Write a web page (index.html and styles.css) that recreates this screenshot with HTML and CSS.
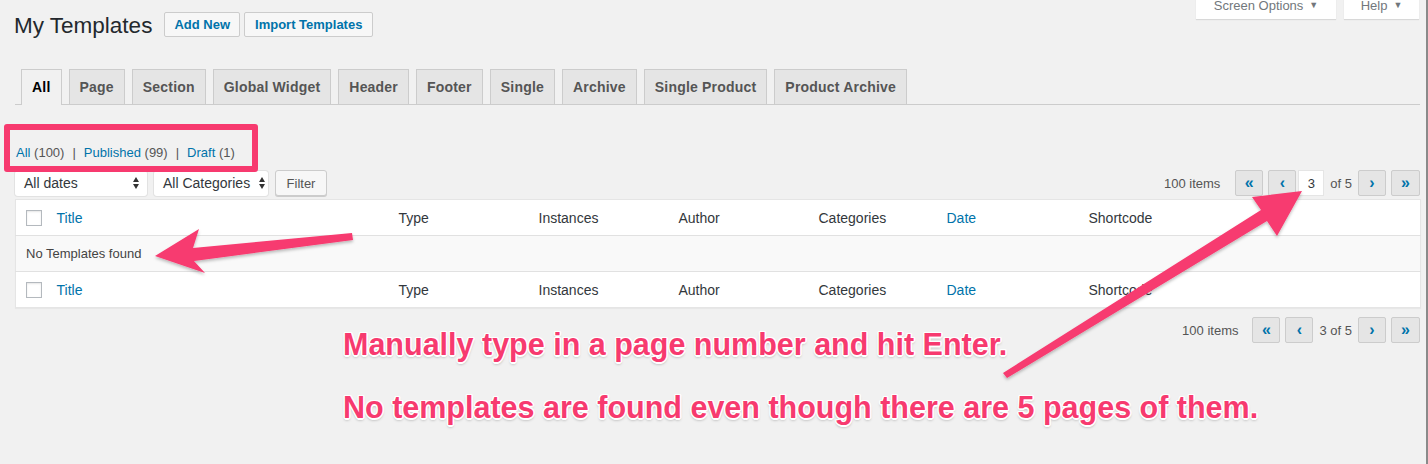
FILE: index.html
```html
<!DOCTYPE html>
<html lang="en">
<head>
<meta charset="utf-8">
<title>My Templates</title>
<link rel="stylesheet" href="styles.css">
</head>
<body>
<div class="screen-meta">
  <button class="meta-tab meta-screen">Screen Options <span class="tri">▼</span></button>
  <button class="meta-tab meta-help">Help <span class="tri">▼</span></button>
</div>

<div class="wrap">
  <div class="page-head">
    <h1 class="page-title">My Templates</h1>
    <a class="page-action">Add New</a>
    <a class="page-action">Import Templates</a>
  </div>

  <nav class="tabs">
    <a class="tab tab-active">All</a>
    <a class="tab">Page</a>
    <a class="tab">Section</a>
    <a class="tab">Global Widget</a>
    <a class="tab">Header</a>
    <a class="tab">Footer</a>
    <a class="tab">Single</a>
    <a class="tab">Archive</a>
    <a class="tab">Single Product</a>
    <a class="tab">Product Archive</a>
  </nav>

  <ul class="subsubsub">
    <li><a class="cur">All</a> <span class="count">(100)</span></li>
    <li class="sep">|</li>
    <li><a>Published</a> <span class="count">(99)</span></li>
    <li class="sep">|</li>
    <li><a>Draft</a> <span class="count">(1)</span></li>
  </ul>

  <div class="tablenav tablenav-top">
    <div class="filters">
      <div class="select sel-dates">All dates <span class="updown"></span></div>
      <div class="select sel-cats">All Categories <span class="updown"></span></div>
      <button class="btn-filter">Filter</button>
    </div>
    <div class="pagination">
      <span class="items">100 items</span>
      <span class="pg-btn">«</span>
      <span class="pg-btn">‹</span>
      <span class="pg-input">3</span>
      <span class="pg-of">of 5</span>
      <span class="pg-btn">›</span>
      <span class="pg-btn pg-last">»</span>
    </div>
  </div>

  <table class="list">
    <colgroup>
      <col class="c-cb"><col class="c-title"><col class="c-type"><col class="c-inst"><col class="c-author"><col class="c-cat"><col class="c-date"><col class="c-short">
    </colgroup>
    <thead>
      <tr>
        <td class="cb"><span class="checkbox"></span></td>
        <th class="link">Title</th>
        <th>Type</th>
        <th>Instances</th>
        <th>Author</th>
        <th>Categories</th>
        <th class="link">Date</th>
        <th>Shortcode</th>
      </tr>
    </thead>
    <tbody>
      <tr class="no-items"><td colspan="8">No Templates found</td></tr>
    </tbody>
    <tfoot>
      <tr>
        <td class="cb"><span class="checkbox"></span></td>
        <th class="link">Title</th>
        <th>Type</th>
        <th>Instances</th>
        <th>Author</th>
        <th>Categories</th>
        <th class="link">Date</th>
        <th>Shortcode</th>
      </tr>
    </tfoot>
  </table>

  <div class="tablenav tablenav-bottom">
    <div class="pagination">
      <span class="items">100 items</span>
      <span class="pg-btn">«</span>
      <span class="pg-btn">‹</span>
      <span class="pg-text">3 of 5</span>
      <span class="pg-btn">›</span>
      <span class="pg-btn pg-last">»</span>
    </div>
  </div>
</div>

<div class="annot-box"></div>
<svg class="annot-arrows" width="1428" height="464" viewBox="0 0 1428 464">
  <defs>
    <filter id="sh" x="-10%" y="-10%" width="120%" height="130%">
      <feDropShadow dx="0" dy="2" stdDeviation="1.5" flood-color="#000" flood-opacity="0.25"/>
    </filter>
  </defs>
  <polygon filter="url(#sh)" fill="#f73a6f" points="352,233 193,248 199,229 155,256 205,273 194,261 353,240"/>
  <polygon filter="url(#sh)" fill="#f73a6f" points="1003,373 1261,210 1252,197 1302,191 1277,236 1267,221 1007,378"/>
</svg>
<p class="annot-text">Manually type in a page number and hit Enter.<br>No templates are found even though there are 5 pages of them.</p>
<div class="edge"></div>
</body>
</html>
```

FILE: styles.css
```css
html, body {
  margin: 0;
  padding: 0;
}
body {
  background: #f1f1f1;
  font-family: "Liberation Sans", Arial, sans-serif;
  color: #444;
  font-size: 13px;
  width: 1428px;
  height: 464px;
  overflow: hidden;
  position: relative;
}

/* screen meta */
.screen-meta {
  position: absolute;
  top: -9px;
  right: 9px;
  display: flex;
  gap: 8px;
}
.meta-tab {
  font-family: "Liberation Sans", Arial, sans-serif;
  background: #fff;
  border: 0;
  height: 28px;
  padding: 0 16px;
  font-size: 13px;
  color: #72777c;
  box-shadow: 0 1px 1px rgba(0,0,0,.1);
  display: flex;
  align-items: center;
  gap: 6px;
}
.meta-screen { width: 140px; justify-content: center; }
.meta-help { width: 75px; justify-content: center; }
.tri { font-size: 9px; color: #72777c; }

.wrap {
  padding: 9px 8px 0 15px;
}

/* header */
.page-head {
  display: flex;
  align-items: center;
  height: 32px;
  margin-left: -1px;
}
.page-title {
  margin: 0 12px 0 0;
  font-size: 22.5px;
  font-weight: 400;
  color: #23282d;
  line-height: 29px;
}
.page-action {
  display: inline-block;
  height: 23px;
  line-height: 23px;
  padding: 0 9px;
  margin-right: 4px;
  border: 1px solid #ccc;
  border-radius: 2px;
  background: #f7f7f7;
  color: #0073aa;
  font-size: 13px;
  font-weight: 700;
  margin-top: -2px;
}
.page-action + .page-action { padding: 0 10px; }

/* tabs */
.tabs {
  margin-top: 28px;
  display: flex;
  gap: 7px;
  padding-left: 6px;
  border-bottom: 1px solid #ccc;
  height: 35px;
}
.tab {
  box-sizing: border-box;
  height: 35px;
  padding: 0 10px;
  line-height: 34px;
  background: #e5e5e5;
  border: 1px solid #ccc;
  border-bottom: 0;
  font-size: 14px;
  font-weight: 700;
  letter-spacing: 0.2px;
  color: #555;
}
.tab-active {
  background: #f1f1f1;
  color: #000;
  height: 36px;
  position: relative;
  z-index: 1;
}

/* subsubsub */
.subsubsub {
  list-style: none;
  margin: 38px 0 0 1px;
  padding: 0;
  display: flex;
  gap: 6px;
  font-size: 13px;
  line-height: 20px;
  color: #555;
}
.subsubsub a { color: #0073aa; }
.subsubsub .sep { margin: 0 2px; }

/* tablenav */
.tablenav {
  display: flex;
  justify-content: space-between;
  align-items: center;
  height: 26px;
}
.tablenav-top { margin-top: 7px; }
.tablenav-bottom { margin-top: 9px; justify-content: flex-end; }

.filters { display: flex; gap: 7px; align-items: center; }
.select {
  box-sizing: border-box;
  height: 25px;
  background: #fff;
  border-radius: 3px;
  box-shadow: 0 0 0 1px #e2e2e2;
  padding: 0 7px 0 9px;
  display: flex;
  align-items: center;
  justify-content: space-between;
  color: #32373c;
  font-size: 14px;
}
.sel-dates { width: 132px; }
.sel-cats { width: 114px; padding-left: 9px; padding-right: 2px; }
.updown {
  width: 7px;
  height: 12px;
  position: relative;
}
.updown::before, .updown::after {
  content: "";
  position: absolute;
  left: 0;
  border-left: 3.5px solid transparent;
  border-right: 3.5px solid transparent;
}
.updown::before { top: 0; border-bottom: 5px solid #333; }
.updown::after { bottom: 0; border-top: 5px solid #333; }

.btn-filter {
  font-family: "Liberation Sans", Arial, sans-serif;
  box-sizing: border-box;
  height: 26px;
  width: 52px;
  background: #f7f7f7;
  border: 1px solid #ccc;
  border-radius: 3px;
  box-shadow: 0 1px 0 #ccc;
  font-size: 13px;
  color: #555;
  padding: 0;
}

.pagination {
  display: flex;
  align-items: center;
  gap: 5px;
  font-size: 13px;
  color: #555;
}
.items { margin-right: 9px; }
.tablenav-top .items { margin-right: 10px; }
.pg-btn {
  box-sizing: border-box;
  width: 28px;
  height: 26px;
  background: #e5e5e5;
  border: 1px solid #ccc;
  border-radius: 2px;
  color: #0073aa;
  font-size: 16px;
  font-weight: 700;
  display: flex;
  align-items: center;
  justify-content: center;
  line-height: 1;
}
.pg-last { width: 29px; }
.pg-input {
  box-sizing: border-box;
  width: 24px;
  height: 24px;
  background: #fff;
  box-shadow: 0 0 0 1px #e5e5e5;
  display: flex;
  align-items: center;
  justify-content: center;
  font-size: 13px;
  color: #32373c;
  margin-left: -2px;
}
.pg-of { margin: 0 1px 0 2px; }
.pg-text { margin: 0 1px; }

/* table */
.list {
  margin-top: 3px;
  width: 1405px;
  border-collapse: collapse;
  table-layout: fixed;
  background: #fff;
  border: 1px solid #e5e5e5;
  box-shadow: 0 1px 1px rgba(0,0,0,.04);
}
.c-cb { width: 31px; }
.c-title { width: 342px; }
.c-type { width: 140px; }
.c-inst { width: 140px; }
.c-author { width: 140px; }
.c-cat { width: 128px; }
.c-date { width: 142px; }
.c-short { width: 342px; }
.list th, .list td {
  text-align: left;
  font-weight: 400;
  font-size: 14px;
  color: #32373c;
  padding: 0 10px;
  height: 35px;
}
.list thead tr { border-bottom: 1px solid #e1e1e1; }
.list tfoot tr { border-top: 1px solid #e1e1e1; }
.list th.link { color: #0073aa; }
.list td.cb { padding: 0 0 0 10px; }
.checkbox {
  display: block;
  box-sizing: border-box;
  width: 16px;
  height: 16px;
  border: 1px solid #b4b9be;
  background: #fff;
  box-shadow: inset 0 1px 2px rgba(0,0,0,.1);
}
.no-items td {
  background: #f9f9f9;
  font-size: 13px;
  color: #444;
  padding-left: 10px;
}

/* annotations */
.annot-box {
  position: absolute;
  left: 4px;
  top: 124px;
  width: 242px;
  height: 36px;
  border: 6px solid #f73a6f;
  border-radius: 3px;
}
.annot-arrows {
  position: absolute;
  left: 0;
  top: 0;
  pointer-events: none;
}
.annot-text {
  position: absolute;
  left: 343px;
  top: 313px;
  margin: 0;
  font-family: "Liberation Sans", Arial, sans-serif;
  font-weight: 700;
  font-size: 30.5px;
  line-height: 63px;
  color: #f73a6f;
  white-space: nowrap;
  text-shadow:
    1.5px 0 0 #fff, -1.5px 0 0 #fff, 0 1.5px 0 #fff, 0 -1.5px 0 #fff,
    1px 1px 0 #fff, -1px -1px 0 #fff, 1px -1px 0 #fff, -1px 1px 0 #fff,
    0 2px 3px rgba(0,0,0,.35);
}
.edge {
  position: absolute;
  right: 0;
  top: 0;
  width: 2px;
  height: 464px;
  background: #8a8a8a;
}
```
